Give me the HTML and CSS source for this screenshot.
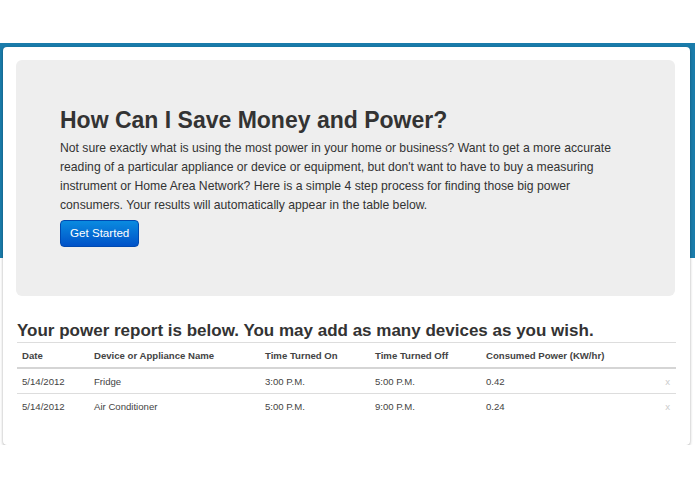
FILE: index.html
```
<!DOCTYPE html>
<html lang="en">

<head>
    <meta charset="UTF-8">
    <meta name="viewport" content="width=device-width, initial-scale=1.0">
    <title>Power Report</title>
    <link rel="stylesheet" href="styles.css">
</head>

<body>
    <div class="top-bar"></div>
    <div class="band"></div>
    <div class="card">
        <div class="hero">
            <h1>How Can I Save Money and Power?</h1>
            <p>Not sure exactly what is using the most power in your home or business? Want to get a more accurate
                reading of a particular appliance or device or equipment, but don't want to have to buy a measuring
                instrument or Home Area Network? Here is a simple 4 step process for finding those big power
                consumers. Your results will automatically appear in the table below.</p>
            <a class="btn" href="#">Get Started</a>
        </div>
        <h2>Your power report is below. You may add as many devices as you wish.</h2>
        <table class="report">
            <thead>
                <tr>
                    <th class="c-date">Date</th>
                    <th class="c-name">Device or Appliance Name</th>
                    <th class="c-on">Time Turned On</th>
                    <th class="c-off">Time Turned Off</th>
                    <th class="c-pow">Consumed Power (KW/hr)</th>
                    <th class="c-del"></th>
                </tr>
            </thead>
            <tbody>
                <tr>
                    <td>5/14/2012</td>
                    <td>Fridge</td>
                    <td>3:00 P.M.</td>
                    <td>5:00 P.M.</td>
                    <td>0.42</td>
                    <td class="del">x</td>
                </tr>
                <tr>
                    <td>5/14/2012</td>
                    <td>Air Conditioner</td>
                    <td>5:00 P.M.</td>
                    <td>9:00 P.M.</td>
                    <td>0.24</td>
                    <td class="del">x</td>
                </tr>
            </tbody>
        </table>
    </div>
</body>

</html>
```

FILE: styles.css
```
* {
    margin: 0;
    padding: 0;
    box-sizing: border-box;
}

body {
    background-color: #fff;
    font-family: "Liberation Sans", Arial, sans-serif;
    color: #333;
}

.top-bar {
    height: 43px;
}

.band {
    height: 215px;
    background-color: #1a7cab;
}

.card {
    margin: -211px 5px 0 3px;
    background-color: #fff;
    border-radius: 4px;
    padding: 13px 15px 27px 13px;
    box-shadow: 0 1px 3px rgba(0, 0, 0, 0.35);
}

.hero {
    background-color: #eeeeee;
    border-radius: 6px;
    padding: 46px 44px 0 44px;
    height: 236px;
}

.hero h1 {
    font-size: 23px;
    line-height: 28px;
    color: #333;
    margin-bottom: 5px;
}

.hero p {
    font-size: 12.2px;
    line-height: 19px;
    color: #333;
    margin-bottom: 5px;
}

.btn {
    display: inline-block;
    padding: 5px 9px 6px 9px;
    font-size: 11.6px;
    line-height: 14px;
    color: #fff;
    text-decoration: none;
    border-radius: 4px;
    background-image: linear-gradient(#0a8be0, #0052c8);
    border: 1px solid #0049b0;
}

h2 {
    font-size: 17px;
    line-height: 20px;
    margin: 25px 0 1px 1px;
    color: #333;
}

.report {
    width: 100%;
    border-collapse: collapse;
    font-size: 9.6px;
    margin-left: 1px;
}

.report th,
.report td {
    text-align: left;
    padding: 5px 5px 4px 5px;
    line-height: 15px;
    border-top: 1px solid #ddd;
}

.report th {
    color: #444;
    font-weight: bold;
    border-bottom: 2px solid #d5d5d5;
}

.report td {
    color: #444;
}

.c-date { width: 72px; }
.c-name { width: 171px; }
.c-on { width: 110px; }
.c-off { width: 111px; }

.report .del {
    color: #ccc;
    text-align: right;
    padding-right: 6px;
}
```
